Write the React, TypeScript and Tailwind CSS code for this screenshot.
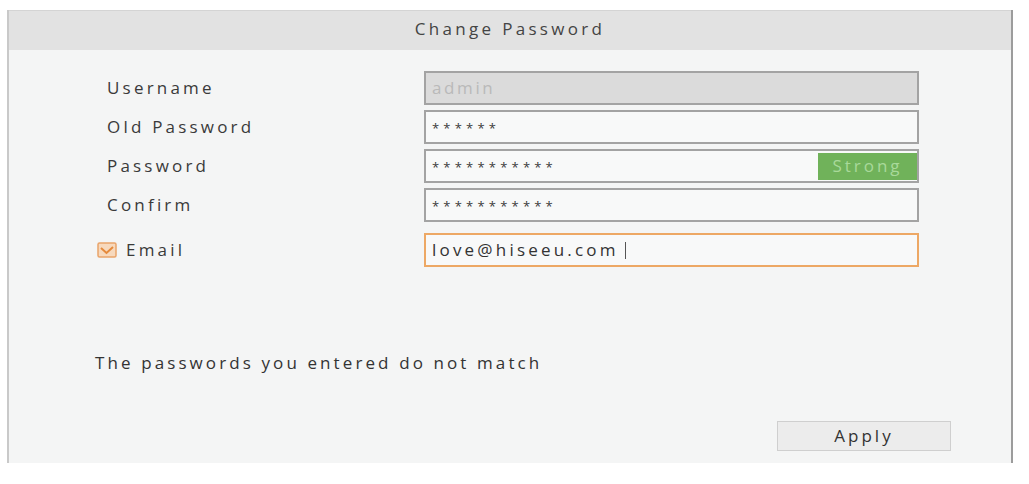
import React from "react";

const font = { fontFamily: '"Open Sans", "Liberation Sans", sans-serif' };

function Field({
  children,
  className = "",
}: {
  children: React.ReactNode;
  className?: string;
}) {
  return (
    <div
      className={`h-[34px] w-[495px] border-2 flex items-center pl-[6px] ${className}`}
    >
      {children}
    </div>
  );
}

function Stars({ n }: { n: number }) {
  return (
    <span className="text-[13px] tracking-[4.2px] text-[#3a3a3a] leading-none pt-[2px]">
      {"*".repeat(n)}
    </span>
  );
}

function Label({ children }: { children: React.ReactNode }) {
  return (
    <div className="w-[327px] pl-[10px] text-[17px] font-medium tracking-[3.2px] text-[#3a3a3a]">
      {children}
    </div>
  );
}

export default function App() {
  return (
    <div className="w-[1029px] h-[484px] bg-white overflow-hidden" style={font}>
      <div className="ml-[7px] mt-[10px] w-[1006px] h-[453px] border-l-2 border-r-2 border-l-[#c9c9c9] border-r-[#9c9c9c] bg-[#f4f5f5] flex flex-col">
        <div className="h-[40px] pb-[4px] bg-[#e2e2e2] border-t border-[#d4d4d4] flex items-center justify-center text-[17px] tracking-[3.3px] text-[#444]">
          Change Password
        </div>

        <div className="flex-1 flex flex-col pt-[21px] pl-[88px] pr-[60px]">
          <div className="flex flex-col gap-[5px]">
            <div className="flex items-center">
              <Label>Username</Label>
              <Field className="bg-[#dbdbdb] border-[#a3a3a3]">
                <span className="text-[17px] tracking-[2.6px] text-[#b9b9b9]">admin</span>
              </Field>
            </div>
            <div className="flex items-center">
              <Label>Old Password</Label>
              <Field className="bg-[#f8f9f9] border-[#a3a3a3]">
                <Stars n={6} />
              </Field>
            </div>
            <div className="flex items-center">
              <Label>Password</Label>
              <Field className="bg-[#f8f9f9] border-[#a3a3a3] justify-between">
                <Stars n={11} />
                <div className="h-[27px] w-[99px] bg-[#70b25a] flex items-center justify-center text-[17px] tracking-[3px] text-[#a9d99a]">
                  Strong
                </div>
              </Field>
            </div>
            <div className="flex items-center">
              <Label>Confirm</Label>
              <Field className="bg-[#f8f9f9] border-[#a3a3a3]">
                <Stars n={11} />
              </Field>
            </div>
            <div className="flex items-center mt-[6px]">
              <div className="w-[327px] flex items-center gap-[9px] text-[17px] font-medium tracking-[3.2px] text-[#3a3a3a]">
                <svg width="20" height="16" viewBox="0 0 20 16">
                  <rect x="1" y="1" width="18" height="14" rx="1.5" fill="#f7d9bd" stroke="#e9a46a" strokeWidth="1.5" />
                  <path d="M4 6 L9.5 11 L16 5" fill="none" stroke="#e58a3c" strokeWidth="2" />
                </svg>
                <span>Email</span>
              </div>
              <Field className="bg-[#f8f9f9] border-[#eda865]">
                <span className="text-[17px] tracking-[3.2px] text-[#333]">love@hiseeu.com</span>
                <span className="ml-[6px] w-px h-[17px] bg-[#555]" />
              </Field>
            </div>
          </div>

          <div className="mt-[86px] -ml-[2px] text-[17px] tracking-[3.1px] text-[#333] leading-[20px]">
            The passwords you entered do not match
          </div>

          <div className="mt-[48px] flex justify-end">
            <button className="h-[30px] w-[174px] bg-[#ececec] border border-[#cfcfcf] text-[17px] tracking-[3px] text-[#333]">
              Apply
            </button>
          </div>
        </div>
      </div>
    </div>
  );
}
